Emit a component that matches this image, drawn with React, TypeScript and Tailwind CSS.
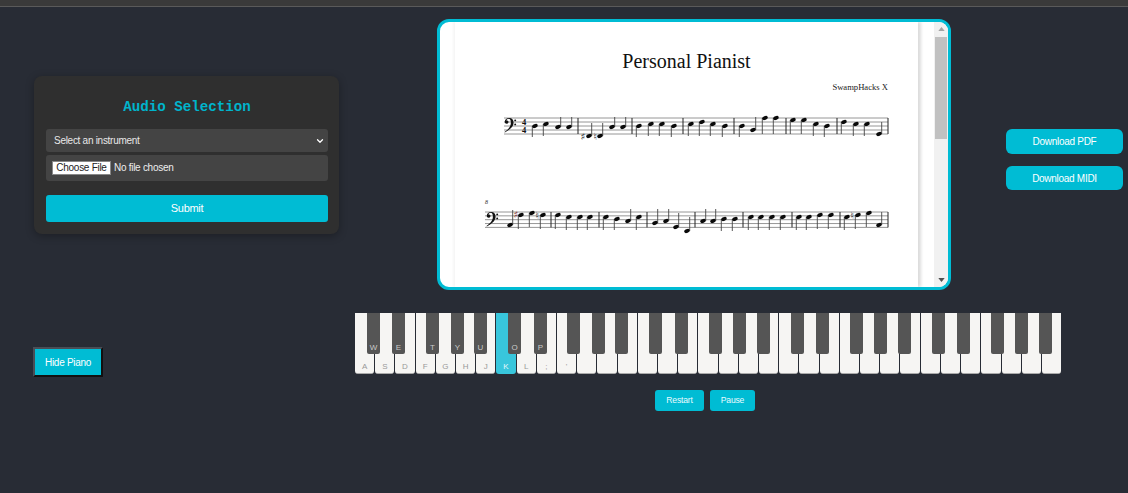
import { ChevronDown } from "lucide-react";

// [note x, note y, stem end y]
type Note = [number, number, number];

const staffOne: Note[] = [
  [535, 126, 137], [546, 124, 136], [558, 127, 117], [569, 127, 117],
  [589, 136, 123], [600, 136, 123], [612, 127, 117], [623, 127, 117],
  [639, 126, 137], [651, 124, 136], [662, 124, 136], [674, 126, 137],
  [691, 124, 136], [702, 122, 136], [713, 124, 136], [725, 126, 137],
  [742, 126, 137], [753, 130, 117], [765, 118, 134], [776, 118, 134],
  [793, 120, 134], [804, 120, 134], [816, 124, 136], [827, 126, 137],
  [844, 122, 134], [856, 124, 136], [867, 124, 136], [879, 134, 122],
];

const staffTwo: Note[] = [
  [510, 225, 210], [521, 215, 229], [532, 213, 227], [543, 215, 229],
  [558, 215, 229], [569, 217, 230], [580, 217, 230], [590, 217, 230],
  [606, 217, 230], [617, 219, 230], [628, 221, 209], [639, 217, 230],
  [655, 223, 209], [666, 221, 209], [676, 227, 213], [687, 231, 217],
  [703, 221, 209], [713, 221, 209], [724, 219, 231], [735, 219, 231],
  [751, 217, 230], [761, 217, 230], [772, 217, 230], [783, 217, 230],
  [799, 217, 230], [809, 217, 230], [820, 215, 229], [831, 215, 229],
  [847, 217, 230], [858, 215, 229], [869, 213, 227], [879, 225, 212],
];

const barsOne = [578, 632, 683, 734, 786, 837, 888];
const barsTwo = [551, 599, 647, 695, 743, 792, 840, 888];

const whiteLabels = ["A", "S", "D", "F", "G", "H", "J", "K", "L", ";", "'"];
const whiteKeys = Array.from({ length: 35 }, (_, i) => whiteLabels[i] ?? "");

const blackKeys: { left: number; label?: string }[] = [
  { left: 12, label: "W" }, { left: 37, label: "E" }, { left: 71, label: "T" },
  { left: 96, label: "Y" }, { left: 119, label: "U" }, { left: 153, label: "O" },
  { left: 179, label: "P" }, { left: 212 }, { left: 237 }, { left: 260 },
  { left: 294 }, { left: 320 }, { left: 354 }, { left: 378 }, { left: 402 },
  { left: 436 }, { left: 461 }, { left: 495 }, { left: 519 }, { left: 543 },
  { left: 577 }, { left: 602 }, { left: 636 }, { left: 660 }, { left: 684 },
];

function BassClef({ x, y }: { x: number; y: number }) {
  return (
    <g transform={`translate(${x} ${y}) scale(0.8)`} fill="#111">
      <path d="M1 5C1 1.5 4 0 6.5 0C10 0 12 2.5 12 6C12 11 7 15 1 18L.6 17.4C5 14.5 8.6 11 8.6 6C8.6 3 7.6 1 5.8 1C4.4 1 3.2 2 3 3.2C4.8 2.6 5.6 3.8 5.6 5C5.6 6.4 4.4 7.2 3.2 7.2C1.9 7.2 1 6.2 1 5Z" />
      <circle cx="14" cy="3" r="1.2" />
      <circle cx="14" cy="8" r="1.2" />
    </g>
  );
}

function Staff({ x1, top, gap, bars, notes }: { x1: number; top: number; gap: number; bars: number[]; notes: Note[] }) {
  return (
    <g>
      {[0, 1, 2, 3, 4].map((i) => (
        <line key={i} x1={x1} x2={888} y1={top + i * gap} y2={top + i * gap} stroke="#8a8a8a" strokeWidth="0.9" />
      ))}
      {bars.map((b) => (
        <line key={b} x1={b} x2={b} y1={top} y2={top + gap * 4} stroke="#222" strokeWidth="1" />
      ))}
      {notes.map(([x, y, end]) => {
        const stemX = end < y ? x + 2.7 : x - 2.7;
        return (
          <g key={`${x}-${y}`}>
            <line x1={stemX} x2={stemX} y1={y} y2={end} stroke="#444" strokeWidth="0.9" />
            <ellipse cx={x} cy={y} rx="2.9" ry="1.9" fill="#0a0a0a" transform={`rotate(-22 ${x} ${y})`} />
          </g>
        );
      })}
    </g>
  );
}

function SheetMusic() {
  return (
    <svg viewBox="455 105 463 135" className="mt-[12px] block h-[135px] w-[463px]">
      <Staff x1={504} top={118} gap={4} bars={barsOne} notes={staffOne} />
      <BassClef x={504} y={118} />
      <text x={522} y={124.5} fontSize="8.5" fontWeight="700" fontFamily="'Liberation Serif', serif" fill="#111">4</text>
      <text x={522} y={132.5} fontSize="8.5" fontWeight="700" fontFamily="'Liberation Serif', serif" fill="#111">4</text>
      <text x={580.5} y={140} fontSize="10" fontFamily="'DejaVu Sans', sans-serif" fill="#222">♯</text>
      <text x={593.5} y={140} fontSize="10" fontFamily="'DejaVu Sans', sans-serif" fill="#222">♮</text>

      <Staff x1={485} top={212} gap={3.85} bars={barsTwo} notes={staffTwo} />
      <BassClef x={486} y={212} />
      <text x={485} y={204} fontSize="6" fontStyle="italic" fontFamily="'Liberation Serif', serif" fill="#333">8</text>
      <text x={513.5} y={218} fontSize="10" fontFamily="'DejaVu Sans', sans-serif" fill="#7a2a2a">♯</text>
      <text x={535.5} y={219} fontSize="10" fontFamily="'DejaVu Sans', sans-serif" fill="#222">♮</text>
      <text x={850.5} y={219} fontSize="10" fontFamily="'DejaVu Sans', sans-serif" fill="#222">♮</text>
    </svg>
  );
}

function AudioCard() {
  return (
    <div className="flex h-[158px] w-[305px] shrink-0 flex-col rounded-lg bg-[#2f2f2f] pt-[22px] pr-[11px] pl-3 shadow-[0_2px_8px_rgba(0,0,0,0.3)]">
      <h2 className="text-center font-['Liberation_Mono',monospace] text-[14.2px] leading-[18px] font-bold text-[#00b4cc]">
        Audio Selection
      </h2>
      <div className="relative mt-[13px]">
        <select className="block h-[23px] w-full appearance-none rounded-[3px] bg-[#444444] pl-2 font-['Liberation_Sans',sans-serif] text-[10px] tracking-[-0.28px] text-[#e8e8e8] outline-none">
          <option>Select an instrument</option>
        </select>
        <ChevronDown className="pointer-events-none absolute top-[7px] right-[3px] h-[10px] w-[10px] text-white" strokeWidth={3} />
      </div>
      <input
        type="file"
        className="mt-[3px] block h-[26px] w-full rounded-[3px] bg-[#444444] px-[6px] py-[6px] font-['Liberation_Sans',sans-serif] text-[10px] leading-[14px] tracking-[-0.28px] text-[#eeeeee] file:mr-[3px] file:h-[14px] file:w-[59px] file:border file:border-[#888] file:bg-white file:p-0 file:font-['Liberation_Sans',sans-serif] file:text-[10px] file:leading-[12px] file:tracking-[-0.28px] file:text-[#222]"
      />
      <button className="mt-[14px] h-[27px] w-full rounded-[3px] bg-[#00bcd4] font-['Liberation_Sans',sans-serif] text-[11px] tracking-[-0.3px] text-white">
        Submit
      </button>
    </div>
  );
}

function SheetViewer() {
  return (
    <div className="flex h-[271px] w-[514px] shrink-0 overflow-hidden rounded-xl border-[3px] border-[#00bcd4] bg-white">
      <div className="w-[15px] shrink-0" />
      <div className="h-full w-[463px] shrink-0 bg-white pt-[28px] shadow-[3px_0_3px_rgba(0,0,0,0.14),-2px_0_2px_rgba(0,0,0,0.04)]">
        <h1 className="text-center font-['Liberation_Serif',serif] text-[20px] leading-[22px] text-[#111]">
          Personal Pianist
        </h1>
        <p className="mt-[10px] pr-[30px] text-right font-['Liberation_Serif',serif] text-[8.6px] leading-[11px] text-[#222]">
          SwampHacks X
        </p>
        <SheetMusic />
      </div>
      <div className="ml-auto flex w-[14px] shrink-0 flex-col items-center bg-[#f1f1f1]">
        <svg viewBox="0 0 8 5" className="mt-[5px] h-[4px] w-[7px] shrink-0">
          <polygon points="4,0 8,5 0,5" fill="#a3a3a3" />
        </svg>
        <div className="mt-[6px] h-[102px] w-[12px] shrink-0 bg-[#c1c1c1]" />
        <svg viewBox="0 0 8 5" className="mt-auto mb-[5px] h-[4px] w-[7px] shrink-0">
          <polygon points="0,0 8,0 4,5" fill="#505050" />
        </svg>
      </div>
    </div>
  );
}

function Piano() {
  return (
    <div className="relative flex h-[61px] w-[706px] gap-px font-['Liberation_Sans',sans-serif]">
      {whiteKeys.map((label, i) => (
        <div
          key={i}
          className={
            i === 7
              ? "flex flex-1 items-end justify-center rounded-b-[3px] bg-[#38c6dc] pb-[2px] text-[8px] leading-[10px] text-[#e6f7fa]"
              : "flex flex-1 items-end justify-center rounded-b-[3px] border-b border-[#aaa] bg-[#f6f5f3] pb-px text-[8px] leading-[10px] text-[#999999]"
          }
        >
          {label}
        </div>
      ))}
      {blackKeys.map((key) => (
        <div
          key={key.left}
          className="absolute top-0 flex h-[41px] w-[13px] items-end justify-center rounded-b-[2px] bg-[#555555] pb-px text-[8px] leading-[10px] text-[#c9c9c9]"
          style={{ left: key.left }}
        >
          {key.label}
        </div>
      ))}
    </div>
  );
}

export default function App() {
  return (
    <div className="min-h-[493px] bg-[#282c35] font-['Liberation_Sans',sans-serif]">
      <div className="h-[7px] border-b border-[#5a5a5a] bg-[#3a3a3a]" />
      <div className="flex items-center pt-[12px] pl-[34px]">
        <AudioCard />
        <div className="ml-[98px]">
          <SheetViewer />
        </div>
        <div className="mt-[10px] ml-[55px] flex w-[117px] flex-col gap-[12px]">
          <button className="h-[25px] rounded-md bg-[#00bcd4] text-[10px] tracking-[-0.28px] text-white">Download PDF</button>
          <button className="h-[24px] rounded-md bg-[#00bcd4] text-[10px] tracking-[-0.28px] text-white">Download MIDI</button>
        </div>
      </div>
      <div className="mt-[23px] flex items-start pl-[33px]">
        <button className="mt-[34px] h-[30px] w-[70px] border-2 border-t-[#4a4e56] border-r-[#111] border-b-[#111] border-l-[#4a4e56] bg-[#00bcd4] text-[10px] tracking-[-0.3px] text-white">
          Hide Piano
        </button>
        <div className="ml-[252px]">
          <Piano />
          <div className="mt-[16px] flex justify-center gap-[6px] pr-[6px]">
            <button className="h-[21px] w-[49px] rounded-[3px] bg-[#00bcd4] text-[8.6px] font-medium tracking-[-0.2px] text-[#e8fbff]">Restart</button>
            <button className="h-[21px] w-[45px] rounded-[3px] bg-[#00bcd4] text-[8.6px] font-medium tracking-[-0.2px] text-[#e8fbff]">Pause</button>
          </div>
        </div>
      </div>
    </div>
  );
}
